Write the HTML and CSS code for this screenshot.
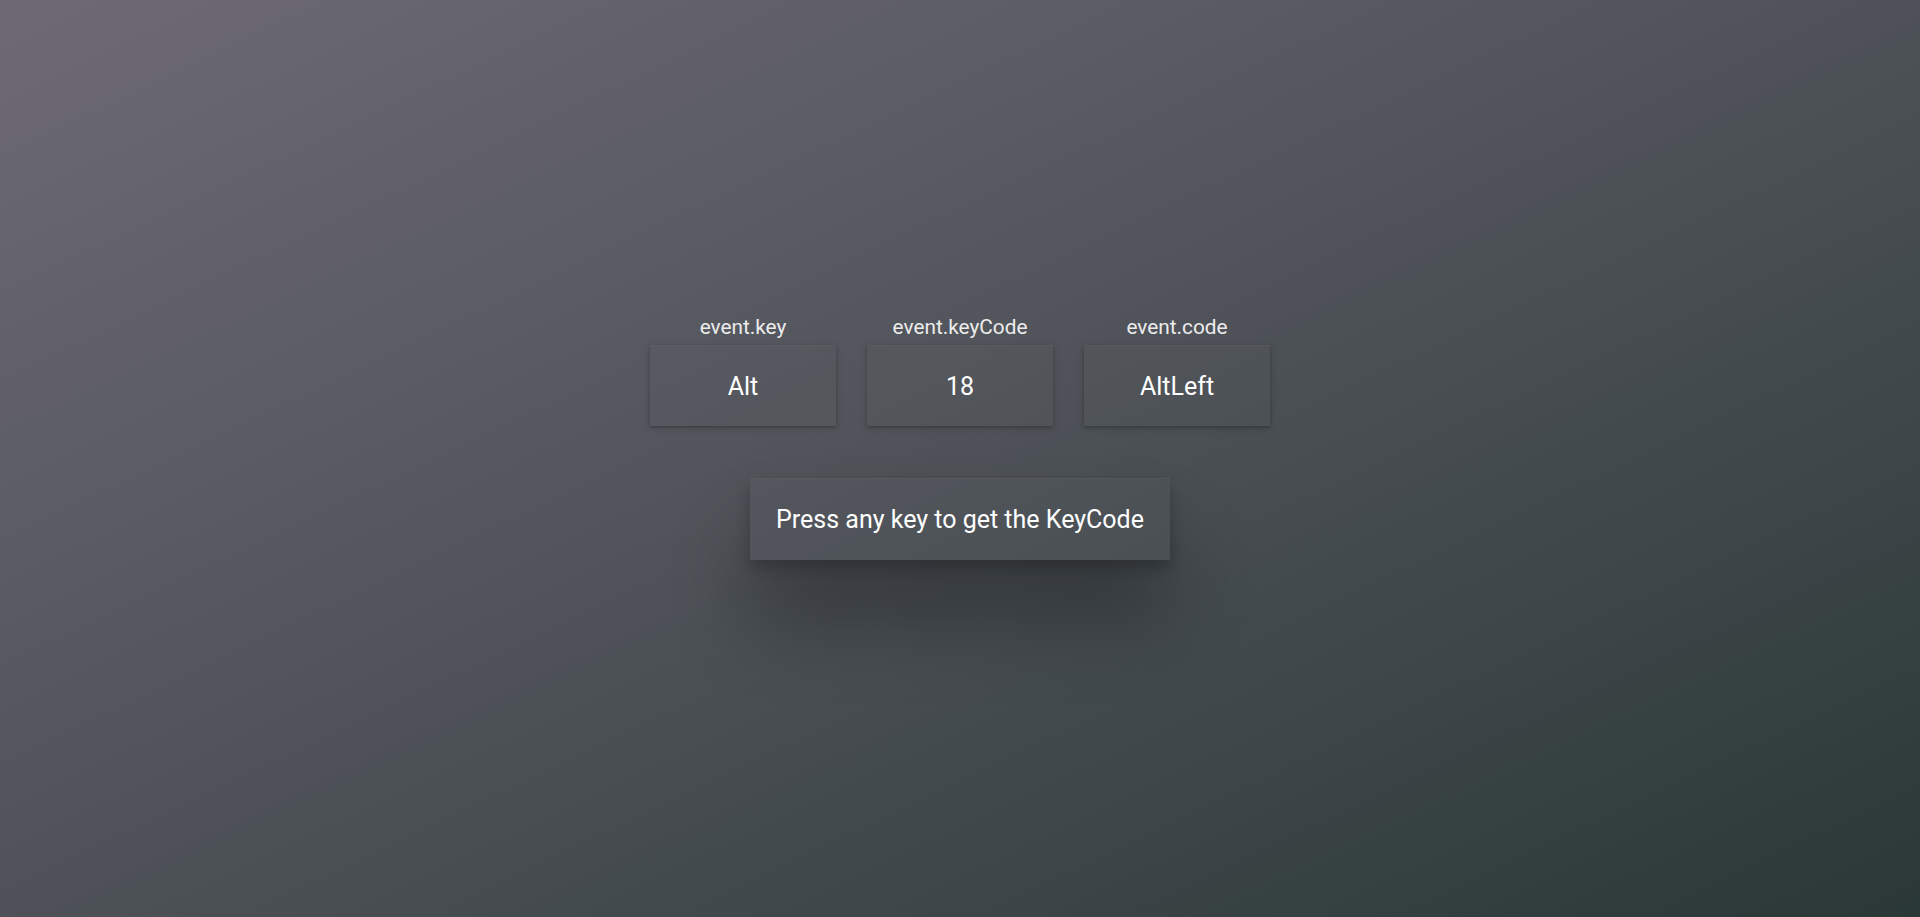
FILE: index.html
```html
<!DOCTYPE html>
<html lang="en">
<head>
<meta charset="utf-8">
<title>KeyCode</title>
<link rel="stylesheet" href="styles.css">
</head>
<body>
<main class="page">
  <div class="keys">
    <div class="key">
      <div class="key-label">event.key</div>
      <div class="key-value">Alt</div>
    </div>
    <div class="key">
      <div class="key-label">event.keyCode</div>
      <div class="key-value">18</div>
    </div>
    <div class="key">
      <div class="key-label">event.code</div>
      <div class="key-value">AltLeft</div>
    </div>
  </div>
  <div class="prompt">Press any key to get the KeyCode</div>
</main>
</body>
</html>
```

FILE: styles.css
```css
html, body {
  margin: 0;
  padding: 0;
  height: 100%;
}

body {
  font-family: Roboto, "Noto Sans", "Liberation Sans", sans-serif;
  background: linear-gradient(to bottom right, #6e6a75 0%, #4e5258 50%, #2a3836 100%);
  color: #fff;
  overflow: hidden;
}

.page {
  height: 100%;
  box-sizing: border-box;
  padding-bottom: 42px;
  display: flex;
  flex-direction: column;
  align-items: center;
  justify-content: center;
}

.keys {
  display: flex;
  gap: 31px;
}

.key {
  display: flex;
  flex-direction: column;
  align-items: center;
}

.key-label {
  font-size: 20.8px;
  color: #ececec;
  margin-bottom: 6px;
}

.key-value {
  width: 186px;
  height: 81px;
  box-sizing: border-box;
  display: flex;
  align-items: center;
  justify-content: center;
  font-size: 25px;
  color: #fff;
  background: rgba(255, 255, 255, 0.01);
  border-top: 1px solid rgba(120, 100, 100, 0.25);
  box-shadow: 0 2px 6px rgba(0, 0, 0, 0.22), 0 1px 2px rgba(0, 0, 0, 0.12);
}

.prompt {
  margin-top: 52px;
  width: 420px;
  height: 82px;
  box-sizing: border-box;
  display: flex;
  align-items: center;
  justify-content: center;
  font-size: 25px;
  color: #fff;
  background: rgba(255, 255, 255, 0.02);
  border-top: 1px solid rgba(120, 100, 100, 0.25);
  box-shadow: 0 60px 80px rgba(0, 0, 0, 0.3), 0 8px 14px rgba(0, 0, 0, 0.24);
}
```
